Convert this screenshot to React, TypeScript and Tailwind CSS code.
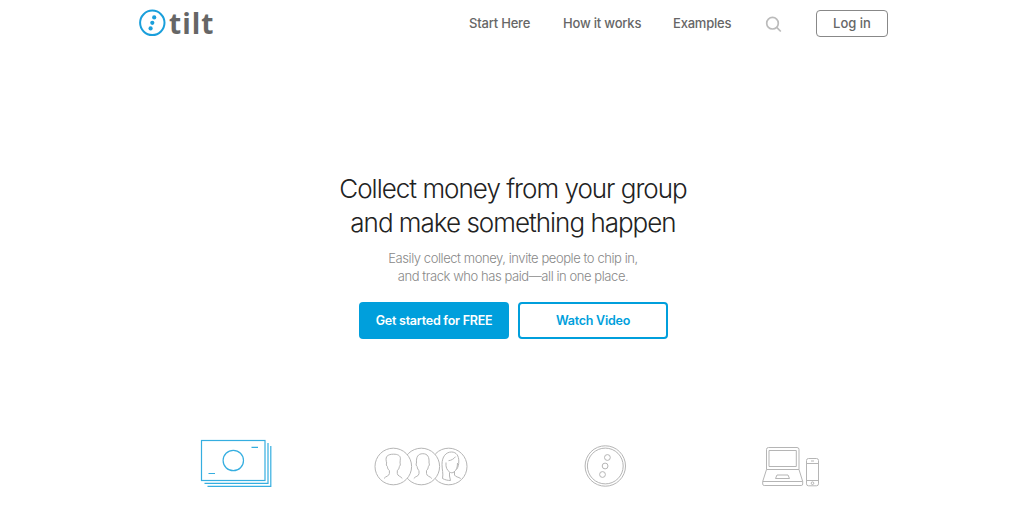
const navLinks = [
  { label: "Start Here", className: "w-[94px]" },
  { label: "How it works", className: "w-[110px]" },
  { label: "Examples", className: "w-[92px]" },
];

function Logo() {
  return (
    <a href="#" className="flex h-[46px] w-[330px] items-start">
      <svg className="mt-[9px] h-[28px] w-[28px]" viewBox="0 0 28 28" fill="none">
        <circle cx="13.3" cy="13.8" r="12.2" stroke="#1a9fdb" strokeWidth="2" />
        <g fill="#1a9fdb">
          <circle cx="15.2" cy="8.4" r="2.1" />
          <circle cx="13.3" cy="13.8" r="2.1" />
          <circle cx="11.6" cy="19.4" r="2.1" />
        </g>
      </svg>
      <span className="ml-[2px] mt-[3px] font-['Open_Sans'] text-[28px] font-bold leading-[40px] tracking-[1px] text-[#666]">
        tilt
      </span>
    </a>
  );
}

function MoneyIcon() {
  return (
    <svg className="h-[50px] w-[74px]" viewBox="199 438 74 50" fill="none" stroke="#35aee0" strokeWidth="1.2">
      <rect x="201.5" y="440.5" width="63.5" height="40" />
      <path d="M268 443v40.4h-63.5M270.8 446v40.3h-63.3M251.5 447.3h6.5M208.5 473.5h6.5" />
      <circle cx="233.3" cy="460.5" r="10.2" />
    </svg>
  );
}

function PeopleIcon() {
  return (
    <svg className="mb-[1px] h-[42px] w-[96px]" viewBox="373 445 96 42" fill="none" stroke="#b5b5b5" strokeWidth="1">
      <circle cx="448.7" cy="466.5" r="18.3" />
      <path d="M446 462.5c-.5 5 1 7.5 3.5 9.5 1.5 1 3 1 4.5 0 2.5-2 3.5-4.5 3.5-9M449.5 472.5v3.5l1 4.5c-3 0-5.5-.7-8-2 1-5-.5-9-.5-14 0-8 4-12.5 9.5-12.5 5 0 7.3 4 7.3 9 0 3.5-.5 6-2.3 8.5M454.5 472v3c1 2 4 2 6.2 3.5M448.5 460.7c3-.3 5.5-2 7-4" />
      <circle cx="421.3" cy="466.5" r="18.3" fill="#fff" />
      <path d="M413.8 478.5c1.5-2.3 5-2 5.2-5v-3c-1-.7-1.7-2-1.8-4-1-.3-1.5-2.5-.7-3.5-.5-6 1.5-9.3 6.3-9.3s6.7 3.3 6.2 9.3c.8 1 .3 3.2-.7 3.5-.1 2-.8 3.3-1.8 4v3c.2 3 3.7 2.7 5.3 5" />
      <circle cx="393.3" cy="466.5" r="18.3" fill="#fff" />
      <path d="M384 478.5c1.5-2.3 5.2-2.3 5.4-5v-3c-1.2-.8-1.9-2-2-4-1-.3-1.4-2.5-.7-3.5-.7-2.5-1-4.5 0-6.5 2-2 4-2.3 7-2.3 4 0 6.5 1.3 6.7 4 0 2-.4 3.3-.4 4.8.7 1 .2 3.2-.7 3.5-.1 2-.8 3.2-2 4v3c.2 2.7 3.5 2.7 5 5" />
    </svg>
  );
}

function CoinIcon() {
  return (
    <svg className="mr-[1px] h-[44px] w-[44px]" viewBox="583 444 44 44" fill="none" stroke="#b5b5b5" strokeWidth="1">
      <circle cx="605.3" cy="466" r="20.2" />
      <circle cx="605.3" cy="466" r="17.9" />
      <circle cx="607.4" cy="457.5" r="2.9" />
      <circle cx="605.1" cy="466" r="2.9" />
      <circle cx="602.5" cy="474.5" r="2.9" />
    </svg>
  );
}

function DevicesIcon() {
  return (
    <svg className="mb-[1px] h-[42px] w-[60px]" viewBox="761 445 60 42" fill="none" stroke="#b5b5b5" strokeWidth="1">
      <path d="M766.5 469.5v-20q0-2 2-2h28.5q2 0 2 2v20zl-3.8 12v2.5q0 1.5 1.5 1.5h37q1.5 0 1.5-1.5v-2.5l-3.7-12M762.7 481.5h40" />
      <path d="M769 450.5h27.3v16H769zM777 475h11l1.5 3.5h-14z" />
      <rect x="806.5" y="458.5" width="12" height="27.3" rx="2" />
      <path d="M806.5 463.5h12M806.5 480.5h12M811 461h3" />
      <circle cx="812.5" cy="483.2" r="1.3" />
    </svg>
  );
}

export default function App() {
  return (
    <div className="h-[505px] w-[1024px] overflow-hidden bg-white font-['Inter',sans-serif]">
      <header className="ml-[139px] flex h-[46px] w-[749px] items-center">
        <Logo />
        <nav className="flex pt-[2px] text-[13px] font-medium tracking-[-0.2px] text-[#666]">
          {navLinks.map((link) => (
            <a key={link.label} href="#" className={link.className}>
              {link.label}
            </a>
          ))}
        </nav>
        <a href="#" aria-label="Search" className="w-[51px]">
          <svg className="mt-[2px] h-[17px] w-[17px]" viewBox="0 0 17 17" fill="none" stroke="#bbb" strokeWidth="1.7">
            <circle cx="7.5" cy="7.2" r="5.8" />
            <path d="M11.7 11.4l4.1 4.1" />
          </svg>
        </a>
        <a
          href="#"
          className="flex h-[27px] w-[72px] shrink-0 items-center justify-center rounded-[4px] border border-[#888] pt-[1px] text-[13px] font-medium text-[#666]"
        >
          Log in
        </a>
      </header>

      <main className="ml-[3px] flex flex-col items-center pt-[126px] text-center">
        <h1 className="mr-[1px] text-[26px] font-light leading-[34px] tracking-[-1px] text-[#222]">
          Collect money from your group
          <br />
          and make something happen
        </h1>
        <p className="mr-[1px] mt-[9px] text-[13px] font-light leading-[18px] tracking-[-0.43px] text-[#888]">
          Easily collect money, invite people to chip in,
          <br />
          and track who has paid—all in one place.
        </p>
        <div className="mt-[17px] flex gap-[9px] text-[12.5px] font-semibold tracking-[-0.25px]">
          <a
            href="#"
            className="flex h-[37px] w-[150px] items-center justify-center rounded-[4px] bg-[#009fdc] pt-[2px] text-white"
          >
            Get started for FREE
          </a>
          <a
            href="#"
            className="flex h-[37px] w-[150px] items-center justify-center rounded-[4px] border-2 border-[#009fdc] pt-[2px] text-[#009fdc]"
          >
            Watch Video
          </a>
        </div>
      </main>

      <section className="ml-[143px] mt-[99px] grid h-[50px] w-[740px] grid-cols-4 items-end justify-items-center">
        <MoneyIcon />
        <PeopleIcon />
        <CoinIcon />
        <DevicesIcon />
      </section>
    </div>
  );
}
